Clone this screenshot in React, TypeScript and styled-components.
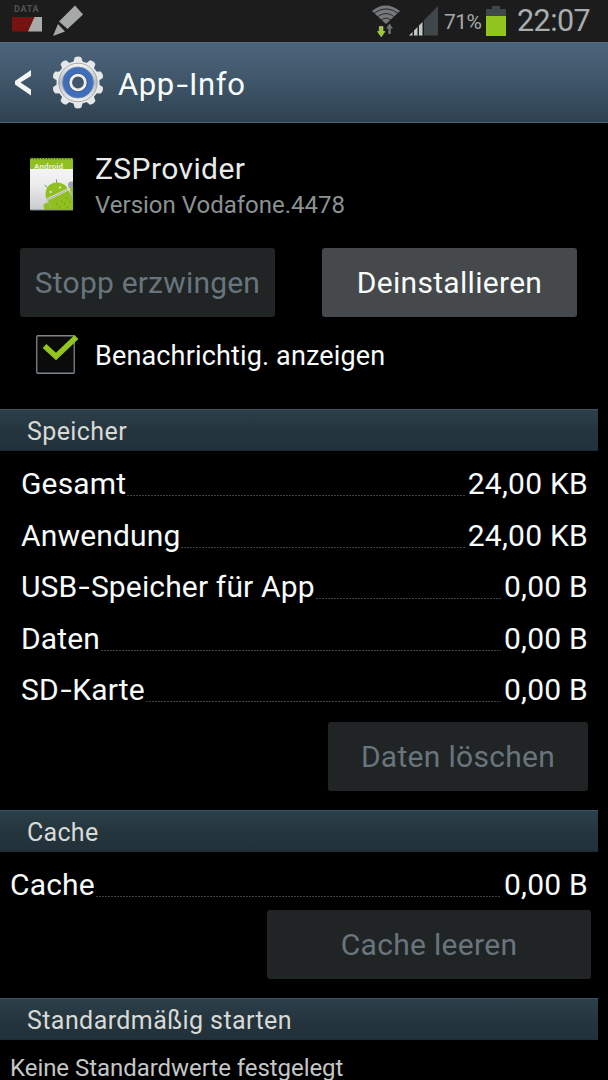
import React from "react";
import styled, { createGlobalStyle } from "styled-components";

const GlobalStyle = createGlobalStyle`
  * { box-sizing: border-box; }
  html, body { margin: 0; background: #000; }
  body { font-family: Roboto, "Liberation Sans", sans-serif; color: #f7fbfa; overflow: hidden; }
`;

const Screen = styled.div`
  width: 608px;
  height: 1080px;
  overflow: hidden;
  display: flex;
  flex-direction: column;
  background: #000;
`;

const Text = styled.span<{ $size: number; $color?: string; $track?: number }>`
  display: block;
  white-space: nowrap;
  font-size: ${(p) => p.$size}px;
  color: ${(p) => p.$color ?? "#f7fbfa"};
  letter-spacing: ${(p) => p.$track ?? 0}px;
`;

const Hyphen = styled.span`
  display: inline-block;
  margin: 0 2px 0 3px;
  transform: scaleX(1.35);
`;

const StatusBar = styled.header`
  height: 42px;
  flex: none;
  display: flex;
  justify-content: space-between;
  background: #1c1c1c;
`;

const StatusGroup = styled.div`
  display: flex;
  align-items: flex-start;
`;

const DataBadge = styled.div`
  width: 30px;
  margin: 4px 0 0 12px;
`;

const DataLabel = styled(Text)`
  font-weight: 700;
  line-height: 11px;
  padding-left: 2px;
  margin-bottom: 2px;
`;

const StatusIcon = styled.svg<{ $left?: number; $top?: number }>`
  display: block;
  flex: none;
  margin: ${(p) => p.$top ?? 0}px 0 0 ${(p) => p.$left ?? 0}px;
`;

const Percent = styled(Text)`
  width: 42px;
  line-height: 44px;
  margin-left: 6px;
`;

const Clock = styled(Text)`
  width: 91px;
  line-height: 42px;
  margin-left: 11px;
`;

const TitleBar = styled.div`
  height: 81px;
  flex: none;
  display: flex;
  align-items: center;
  background: linear-gradient(#4b647b, #42596d 40%, #2e4251);
  border-top: 1px solid #536c82;
  border-bottom: 1px solid #4a667c;
`;

const Title = styled(Text)`
  padding-top: 3px;
`;

const BackIcon = styled.svg`
  display: block;
  margin-left: 14px;
`;

const GearIcon = styled.svg`
  display: block;
  margin: 0 14px 0 20px;
`;

const AppHeader = styled.section`
  height: 125px;
  flex: none;
  display: flex;
  padding: 29px 0 0 29px;
`;

const AppNames = styled.div`
  margin-left: 20px;
`;

const AppName = styled(Text)`
  line-height: 34px;
`;

const AppVersion = styled(Text)`
  line-height: 39px;
`;

const ButtonPair = styled.div`
  flex: none;
  display: flex;
  gap: 47px;
  padding-left: 20px;
`;

const ButtonLine = styled.div<{ $right: number; $top: number }>`
  flex: none;
  display: flex;
  justify-content: flex-end;
  padding: ${(p) => p.$top}px ${(p) => p.$right}px 0 0;
`;

const Button = styled.button<{ $width: number }>`
  width: ${(p) => p.$width}px;
  height: 69px;
  padding: 0;
  border: 0;
  border-radius: 3px;
  display: flex;
  align-items: center;
  justify-content: center;
  font-family: inherit;
  background: #46494b;
  &:disabled { background: #202425; }
`;

const CheckLine = styled.label`
  height: 92px;
  flex: none;
  display: flex;
  padding: 14px 0 0 36px;
`;

const CheckLabel = styled(Text)`
  line-height: 51px;
  margin-left: 14px;
`;

const SectionBar = styled.h2<{ $top?: number }>`
  width: 598px;
  height: 42px;
  flex: none;
  margin: ${(p) => p.$top ?? 0}px 0 0;
  padding-left: 27px;
  font-weight: 400;
  line-height: 43px;
  background: linear-gradient(#2c404b, #25353d 50%, #223139);
  border-top: 1px solid #3b5363;
  border-bottom: 1px solid #1c2c33;
`;

const SizeList = styled.dl<{ $top: number; $left: number }>`
  flex: none;
  margin: 0;
  padding: ${(p) => p.$top}px 20px 0 ${(p) => p.$left}px;
`;

const SizeLine = styled.div`
  height: 51.5px;
  display: flex;
  line-height: 51.5px;
`;

const Leader = styled.i`
  flex: 1;
  height: 1px;
  margin: 37px 3px 0 1px;
  background: repeating-linear-gradient(90deg, #384247 0 2px, #000 2px 3px);
`;

const Footnote = styled(Text)`
  padding-left: 10px;
  line-height: 56px;
`;

const storage = [
  { label: "Gesamt", value: "24,00 KB" },
  { label: "Anwendung", value: "24,00 KB" },
  { label: "USB-Speicher für App", value: "0,00 B" },
  { label: "Daten", value: "0,00 B" },
  { label: "SD-Karte", value: "0,00 B" },
];

const DISABLED = "#68757d";

function Hyphenated({ text }: { text: string }) {
  const [head, tail] = text.split("-");
  return tail === undefined ? <>{head}</> : <>{head}<Hyphen>-</Hyphen>{tail}</>;
}

function SizeRow({ label, value }: { label: string; value: string }) {
  return (
    <SizeLine>
      <Text $size={30} $track={0.15}><Hyphenated text={label} /></Text>
      <Leader />
      <Text $size={30} $track={0.25}>{value}</Text>
    </SizeLine>
  );
}

function Gear() {
  const teeth = Array.from({ length: 10 }, (_, i) => i * 36);
  return (
    <GearIcon width="52" height="54" viewBox="-26 -26.5 52 54">
      <defs>
        <linearGradient id="metal" x1="0" y1="0" x2="0" y2="1">
          <stop offset="0" stopColor="#f4f5f5" />
          <stop offset="0.5" stopColor="#b9bcbe" />
          <stop offset="1" stopColor="#f0f1f2" />
        </linearGradient>
      </defs>
      {teeth.map((a) => (
        <path key={a} transform={`rotate(${a})`} d="M-5-19 L-3.4-25 Q0-27 3.4-25 L5-19Z" fill="#e4e6e7" />
      ))}
      <circle r="21.5" fill="#e9ebec" />
      <circle r="19.3" fill="url(#metal)" stroke="#94999d" strokeWidth="0.8" />
      <circle r="15.5" fill="#3f6ebd" stroke="#7088ad" strokeWidth="0.8" />
      <circle r="7.4" fill="#41566b" stroke="#eceeee" strokeWidth="3" />
      <circle r="9.300" fill="none" stroke="#44536c" strokeWidth="0.8" />
    </GearIcon>
  );
}

function AppIcon() {
  return (
    <svg width="46" height="60" viewBox="0 0 46 60">
      <defs>
        <linearGradient id="paper" x1="0" y1="0" x2="0" y2="1">
          <stop offset="0" stopColor="#fbfbfb" />
          <stop offset="0.5" stopColor="#ececec" />
          <stop offset="1" stopColor="#c9cccd" />
        </linearGradient>
        <clipPath id="page"><rect x="1" y="6" width="43" height="52" /></clipPath>
      </defs>
      <rect x="1" y="6" width="43" height="52" rx="1" fill="url(#paper)" />
      <rect x="1" y="6" width="43" height="11" fill="#8fc01f" />
      <path d="M1 6.5H44" stroke="#3f5417" strokeWidth="1.4" strokeDasharray="1.4 1.4" />
      <text x="5" y="17" fontSize="8" fontWeight="700" fontFamily="Roboto, sans-serif" fill="#e6ecd8" textLength="29">Android</text>
      <g clipPath="url(#page)">
        <circle cx="42.500" cy="33" r="3.500" fill="#9aa3a5" />
        <path d="M27.500 27.500V32M15.500 33 19 36" stroke="#7f8b7b" strokeWidth="1" />
        <path d="M17 46.800C15 37 20 30.500 27.500 30.500 33 30.500 37 33 38.500 36.500Z" fill="#8fc01f" />
        <path d="M18.800 48.800 39.500 38.500 46 47V60H23.500Z" fill="#8fc01f" />
        <path d="M17.500 48.200 39 37.600" stroke="#a3ae9c" strokeWidth="1" />
        <path d="M18.800 49 23.500 60M39.500 38.500 44 47" stroke="#a3ae9c" strokeWidth="1" />
        <path d="M40.500 37 44 34V45Z" fill="#8fc01f" />
        <rect x="13.800" y="51" width="6" height="12" rx="3" transform="rotate(-20 17 52)" fill="#8fc01f" />
        <path d="M27 52h1M32 49h1M37 46h1M30 55h1M35 52h1M40 50h1M38 55h1" stroke="#5f8a1c" strokeWidth="1" />
        <circle cx="21.500" cy="40" r="1" fill="#eef3e0" />
        <circle cx="31" cy="35.500" r="1" fill="#eef3e0" />
      </g>
      <path d="M1 58H44" stroke="#84888a" strokeWidth="1" />
    </svg>
  );
}

function Wifi() {
  return (
    <StatusIcon width="30" height="38" viewBox="0 0 30 38">
      <path d="M1 11C9 3.500 20 3.500 29 11L15 24Z" fill="#76797c" />
      <path d="M3 13.500C10.500 7.500 19.500 7.500 27 13.500M6.500 17C11.500 12.500 18.500 12.500 23.500 17M10 20.300C13 17.500 17 17.500 20 20.300" stroke="#1c1c1c" strokeWidth="0.9" fill="none" />
      <path d="M8.300 26.500H12V31.500H14L10.200 36.800 6.500 31.500H8.300Z" fill="#9acb22" stroke="#e0e6cf" strokeWidth="0.5" />
      <path d="M17.300 34V28.500H15L18.500 23.500 22 28.500H19.800V34Z" fill="#6b7378" />
    </StatusIcon>
  );
}

export default function App() {
  return (
    <>
      <GlobalStyle />
      <Screen>
        <StatusBar>
          <StatusGroup>
            <DataBadge>
              <DataLabel $size={9} $color="#4e5457" $track={0.7}>DATA</DataLabel>
              <svg width="30" height="15" viewBox="0 0 30 15" display="block">
                <path d="M0 0H22.500L16 14.500H0Z" fill="#76120f" />
                <path d="M22.500 0H30V14.500H16Z" fill="#a9abaa" />
              </svg>
            </DataBadge>
            <StatusIcon width="31" height="33" viewBox="0 0 31 33" $left={11} $top={4}>
              <path d="M22 1.500 30 10.500 14.500 25 6 17.500Z" fill="#a6a9a7" />
              <path d="M5 20 12 27.500 0 32Z" fill="#a6a9a7" />
            </StatusIcon>
          </StatusGroup>
          <StatusGroup>
            <Wifi />
            <StatusIcon width="29" height="30" viewBox="0 0 29 30" $left={8} $top={6}>
              <path d="M0 29.500 29 0V29.500Z" fill="#40474b" />
              <path d="M0 29.500 15 14.300V29.500Z" fill="#1c1c1c" />
              <path d="M0 29.500 3.500 26V29.500ZM5 24.500 8.500 21V29.500H5ZM10 19.500 13.500 16V29.500H10Z" fill="#c3c6c5" />
            </StatusIcon>
            <Percent $size={21} $color="#a4a9aa" $track={-0.5}>71%</Percent>
            <StatusIcon width="20" height="30" viewBox="0 0 20 30" $top={6}>
              <path d="M6 0H14V3H20V30H0V3H6Z" fill="#40474b" />
              <path d="M0 10H20V30H0Z" fill="#93c51f" />
            </StatusIcon>
            <Clock $size={30.5} $color="#a8adae" $track={-0.55}>22:07</Clock>
          </StatusGroup>
        </StatusBar>

        <TitleBar>
          <BackIcon width="18" height="28" viewBox="0 0 18 28">
            <path d="M17 1V7L6.500 13.500 17 20.500V26.500L1 15.500V12Z" fill="#f3f5f5" />
          </BackIcon>
          <Gear />
          <Title $size={31} $track={0.6}><Hyphenated text="App-Info" /></Title>
        </TitleBar>

        <AppHeader>
          <AppIcon />
          <AppNames>
            <AppName $size={30} $color="#e9ecea" $track={0.4}>ZSProvider</AppName>
            <AppVersion $size={24} $color="#8b9292">Version Vodafone.4478</AppVersion>
          </AppNames>
        </AppHeader>

        <ButtonPair>
          <Button $width={255} disabled><Text $size={30} $color={DISABLED} $track={0.2}>Stopp erzwingen</Text></Button>
          <Button $width={255}><Text $size={30} $track={0.3}>Deinstallieren</Text></Button>
        </ButtonPair>

        <CheckLine>
          <svg width="45" height="50" viewBox="0 0 45 50">
            <rect x="0.750" y="4.750" width="37.500" height="37.500" rx="1" fill="#0b0b0c" stroke="#7c868b" strokeWidth="1.300" />
            <path d="M8.500 15 20 25.500 40.500 6" stroke="#93c51f" strokeWidth="5.500" fill="none" />
          </svg>
          <CheckLabel $size={27} $track={0.15}>Benachrichtig. anzeigen</CheckLabel>
        </CheckLine>

        <SectionBar><Text $size={25} $color="#d8dad8" $track={0.4}>Speicher</Text></SectionBar>
        <SizeList $top={7} $left={21}>
          {storage.map((s) => <SizeRow key={s.label} {...s} />)}
        </SizeList>
        <ButtonLine $top={6} $right={20}>
          <Button $width={260} disabled><Text $size={30} $color={DISABLED} $track={0.3}>Daten löschen</Text></Button>
        </ButtonLine>

        <SectionBar $top={19}><Text $size={25} $color="#d8dad8" $track={0.3}>Cache</Text></SectionBar>
        <SizeList $top={7} $left={10}>
          <SizeRow label="Cache" value="0,00 B" />
        </SizeList>
        <ButtonLine $top={0} $right={17}>
          <Button $width={324} disabled><Text $size={30} $color={DISABLED} $track={0.3}>Cache leeren</Text></Button>
        </ButtonLine>

        <SectionBar $top={19}><Text $size={25} $color="#d8dad8" $track={0.42}>Standardmäßig starten</Text></SectionBar>
        <Footnote $size={24} $color="#c3c7c6" $track={-0.05}>Keine Standardwerte festgelegt</Footnote>
      </Screen>
    </>
  );
}
